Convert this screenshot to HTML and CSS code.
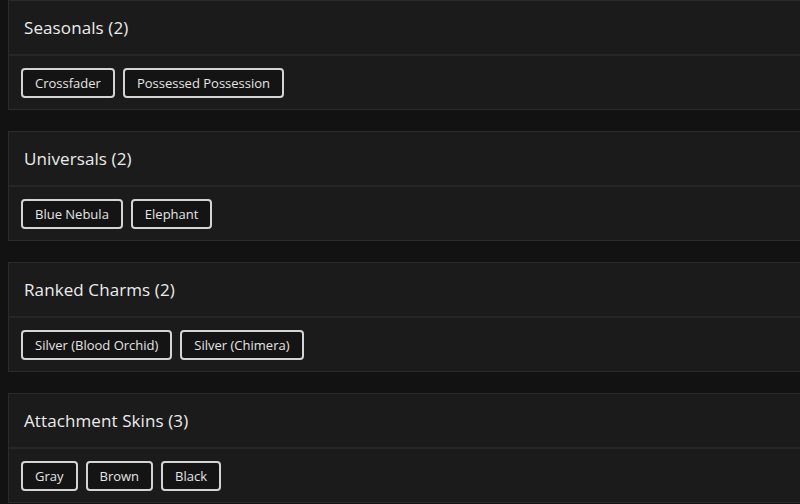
FILE: index.html
```html
<!DOCTYPE html>
<html>
<head>
<meta charset="utf-8">
<link rel="stylesheet" href="styles.css">
</head>
<body>
<div class="list">
  <section class="card">
    <div class="card-head"><h3 class="title">Seasonals (2)</h3></div>
    <div class="card-body">
      <span class="chip">Crossfader</span>
      <span class="chip">Possessed Possession</span>
    </div>
  </section>
  <section class="card">
    <div class="card-head"><h3 class="title">Universals (2)</h3></div>
    <div class="card-body">
      <span class="chip">Blue Nebula</span>
      <span class="chip">Elephant</span>
    </div>
  </section>
  <section class="card">
    <div class="card-head"><h3 class="title">Ranked Charms (2)</h3></div>
    <div class="card-body">
      <span class="chip">Silver (Blood Orchid)</span>
      <span class="chip">Silver (Chimera)</span>
    </div>
  </section>
  <section class="card">
    <div class="card-head"><h3 class="title">Attachment Skins (3)</h3></div>
    <div class="card-body">
      <span class="chip">Gray</span>
      <span class="chip">Brown</span>
      <span class="chip">Black</span>
    </div>
  </section>
</div>
</body>
</html>
```
FILE: styles.css
```css
html, body {
  margin: 0;
  padding: 0;
  background: #121212;
  overflow: hidden;
}
body {
  font-family: "Open Sans", "DejaVu Sans", sans-serif;
  color: #e8e8e8;
}
.list {
  display: flex;
  flex-direction: column;
  gap: 21px;
  padding-left: 8px;
  width: 820px;
}
.card {
  background: #1b1b1b;
  border: 1px solid #2b2b2b;
  height: 110px;
  box-sizing: border-box;
  display: flex;
  flex-direction: column;
}
.card-head {
  height: 55px;
  box-sizing: border-box;
  border-bottom: 2px solid #262626;
  display: flex;
  align-items: center;
  padding-left: 15px;
  padding-bottom: 1px;
}
.title {
  margin: 0;
  font-size: 17px;
  font-weight: 500;
  letter-spacing: 0.1px;
  color: #ececec;
}
.card-body {
  flex: 1;
  display: flex;
  align-items: center;
  gap: 8px;
  padding-left: 12px;
}
.chip {
  border: 2px solid #d4d4d4;
  border-radius: 4px;
  background: #141414;
  padding: 0 12px;
  height: 30px;
  box-sizing: border-box;
  display: inline-flex;
  align-items: center;
  font-size: 13px;
  color: #e4e4e4;
}
```
